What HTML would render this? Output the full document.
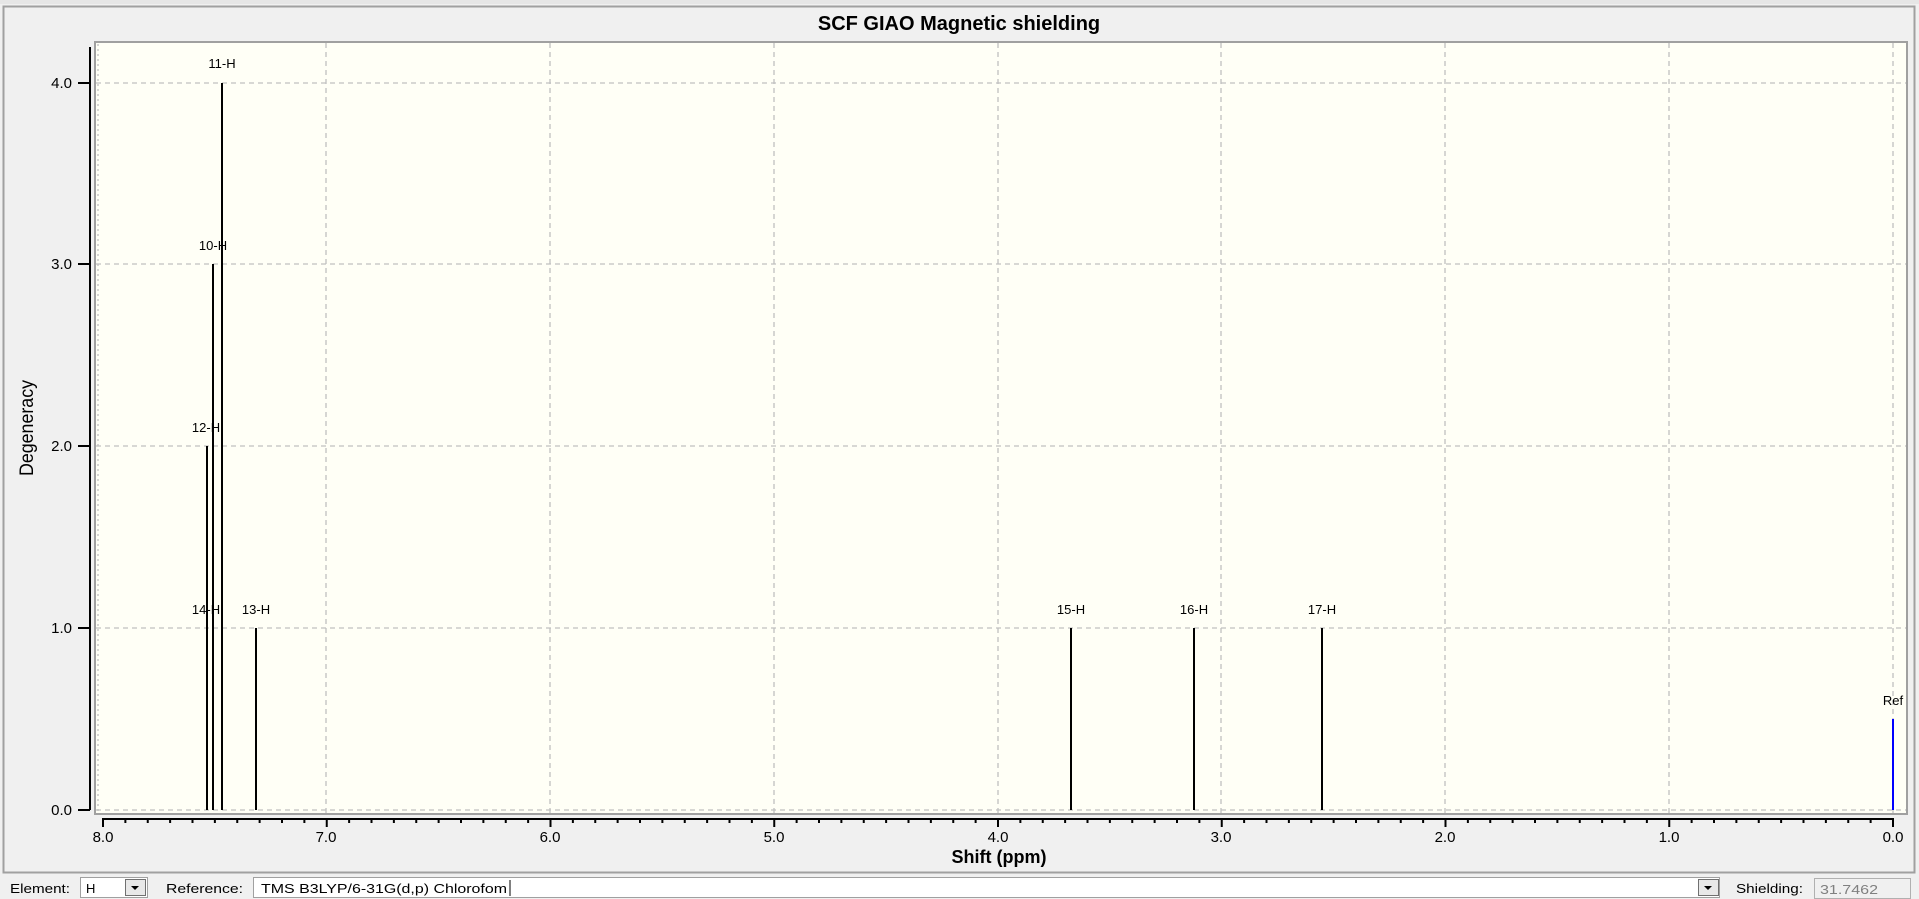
<!DOCTYPE html>
<html><head><meta charset="utf-8"><style>
html,body{margin:0;padding:0;background:#f0f0f0;width:1919px;height:899px;overflow:hidden;font-family:"Liberation Sans",sans-serif}
svg{position:absolute;left:0;top:0}
</style></head><body>
<svg width="1919" height="899" viewBox="0 0 1919 899" font-family="Liberation Sans, sans-serif">
<rect x="0" y="0" width="1919" height="899" fill="#f0f0f0"/>
<rect x="0" y="0" width="1919" height="4" fill="#e6e6e6"/>
<rect x="3.5" y="6.5" width="1911" height="866" fill="#f0f0f0" stroke="#a0a0a0" stroke-width="2"/>
<text x="959" y="30" text-anchor="middle" font-size="20" font-weight="bold" fill="#000">SCF GIAO Magnetic shielding</text>
<rect x="95" y="42" width="1812" height="772" fill="#fffff6" stroke="#a0a0a0" stroke-width="2"/>
<line x1="98" y1="44" x2="98" y2="812" stroke="#c8c8c8" stroke-width="1.5" stroke-dasharray="2,3"/>
<g stroke="#c0c0c0" stroke-width="1.3" stroke-dasharray="5,4">
<line x1="96" y1="83" x2="1906" y2="83"/>
<line x1="96" y1="264" x2="1906" y2="264"/>
<line x1="96" y1="446" x2="1906" y2="446"/>
<line x1="96" y1="628" x2="1906" y2="628"/>
<line x1="96" y1="810" x2="1906" y2="810"/>
<line x1="326" y1="43" x2="326" y2="813"/>
<line x1="550" y1="43" x2="550" y2="813"/>
<line x1="774" y1="43" x2="774" y2="813"/>
<line x1="998" y1="43" x2="998" y2="813"/>
<line x1="1221" y1="43" x2="1221" y2="813"/>
<line x1="1445" y1="43" x2="1445" y2="813"/>
<line x1="1669" y1="43" x2="1669" y2="813"/>
<line x1="1893" y1="43" x2="1893" y2="813"/>
</g>
<line x1="90" y1="47" x2="90" y2="810" stroke="#000" stroke-width="2"/>
<g stroke="#000" stroke-width="2">
<line x1="78" y1="83" x2="90" y2="83"/><line x1="78" y1="264" x2="90" y2="264"/>
<line x1="78" y1="446" x2="90" y2="446"/><line x1="78" y1="628" x2="90" y2="628"/>
<line x1="78" y1="810" x2="90" y2="810"/>
</g>
<g font-size="15" text-anchor="end" fill="#000">
<text x="72" y="88">4.0</text><text x="72" y="269">3.0</text><text x="72" y="451">2.0</text>
<text x="72" y="633">1.0</text><text x="72" y="815">0.0</text>
</g>
<text transform="translate(33,428) rotate(-90)" text-anchor="middle" font-size="19" fill="#000" textLength="96" lengthAdjust="spacingAndGlyphs">Degeneracy</text>
<line x1="102" y1="819" x2="1894" y2="819" stroke="#000" stroke-width="2"/>
<g id="ticks" stroke="#000" stroke-width="2"></g>
<g font-size="15" text-anchor="middle" fill="#000">
<text x="103" y="842">8.0</text><text x="326" y="842">7.0</text><text x="550" y="842">6.0</text>
<text x="774" y="842">5.0</text><text x="998" y="842">4.0</text><text x="1221" y="842">3.0</text>
<text x="1445" y="842">2.0</text><text x="1669" y="842">1.0</text><text x="1893" y="842">0.0</text>
</g>
<text x="999" y="863" text-anchor="middle" font-size="18" font-weight="bold" fill="#000">Shift (ppm)</text>
<g stroke="#000" stroke-width="2">
<line x1="207" y1="446" x2="207" y2="810"/>
<line x1="213" y1="264" x2="213" y2="810"/>
<line x1="222" y1="83" x2="222" y2="810"/>
<line x1="256" y1="628" x2="256" y2="810"/>
<line x1="1071" y1="628" x2="1071" y2="810"/>
<line x1="1194" y1="628" x2="1194" y2="810"/>
<line x1="1322" y1="628" x2="1322" y2="810"/>
</g>
<line x1="1893" y1="719" x2="1893" y2="810" stroke="#0000ff" stroke-width="2"/>
<g font-size="13" text-anchor="middle" fill="#000">
<text x="222" y="68">11-H</text>
<text x="213" y="250">10-H</text>
<text x="206" y="432">12-H</text>
<text x="206" y="614">14-H</text>
<text x="256" y="614">13-H</text>
<text x="1071" y="614">15-H</text>
<text x="1194" y="614">16-H</text>
<text x="1322" y="614">17-H</text>
<text x="1893" y="705">Ref</text>
</g>
<g font-size="13" fill="#000">
<text x="10" y="893" textLength="60" lengthAdjust="spacingAndGlyphs">Element:</text>
<text x="166" y="893" textLength="77" lengthAdjust="spacingAndGlyphs">Reference:</text>
<text x="1736" y="893" textLength="67" lengthAdjust="spacingAndGlyphs">Shielding:</text>
</g>
<rect x="80.5" y="877.5" width="67" height="20" fill="#fff" stroke="#a0a0a0"/>
<text x="86" y="893" font-size="13">H</text>
<rect x="125.5" y="879.5" width="20" height="16" fill="#e8e8e8" stroke="#707070"/>
<path d="M131 886 L139 886 L135 890 Z" fill="#000"/>
<rect x="253.5" y="877.5" width="1466" height="20" fill="#fff" stroke="#a0a0a0"/>
<text x="261" y="893" font-size="13" textLength="246" lengthAdjust="spacingAndGlyphs">TMS B3LYP/6-31G(d,p) Chlorofom</text>
<line x1="510" y1="880" x2="510" y2="896" stroke="#000"/>
<rect x="1698.5" y="879.5" width="20" height="16" fill="#e8e8e8" stroke="#707070"/>
<path d="M1704 886 L1712 886 L1708 890 Z" fill="#000"/>
<rect x="1814.5" y="878.5" width="96" height="20" fill="#f0f0f0" stroke="#b0b0b0"/>
<text x="1820" y="894" font-size="13" fill="#808080" textLength="58" lengthAdjust="spacingAndGlyphs">31.7462</text>
</svg>
<script>
(function(){var g=document.getElementById('ticks');var s='';for(var i=0;i<=80;i++){var x=103+i*(1893-103)/80;var big=(i%10==0);s+='<line x1="'+x+'" y1="819" x2="'+x+'" y2="'+(big?827:823)+'"/>';}g.innerHTML=s;})();
</script>
</body></html>
